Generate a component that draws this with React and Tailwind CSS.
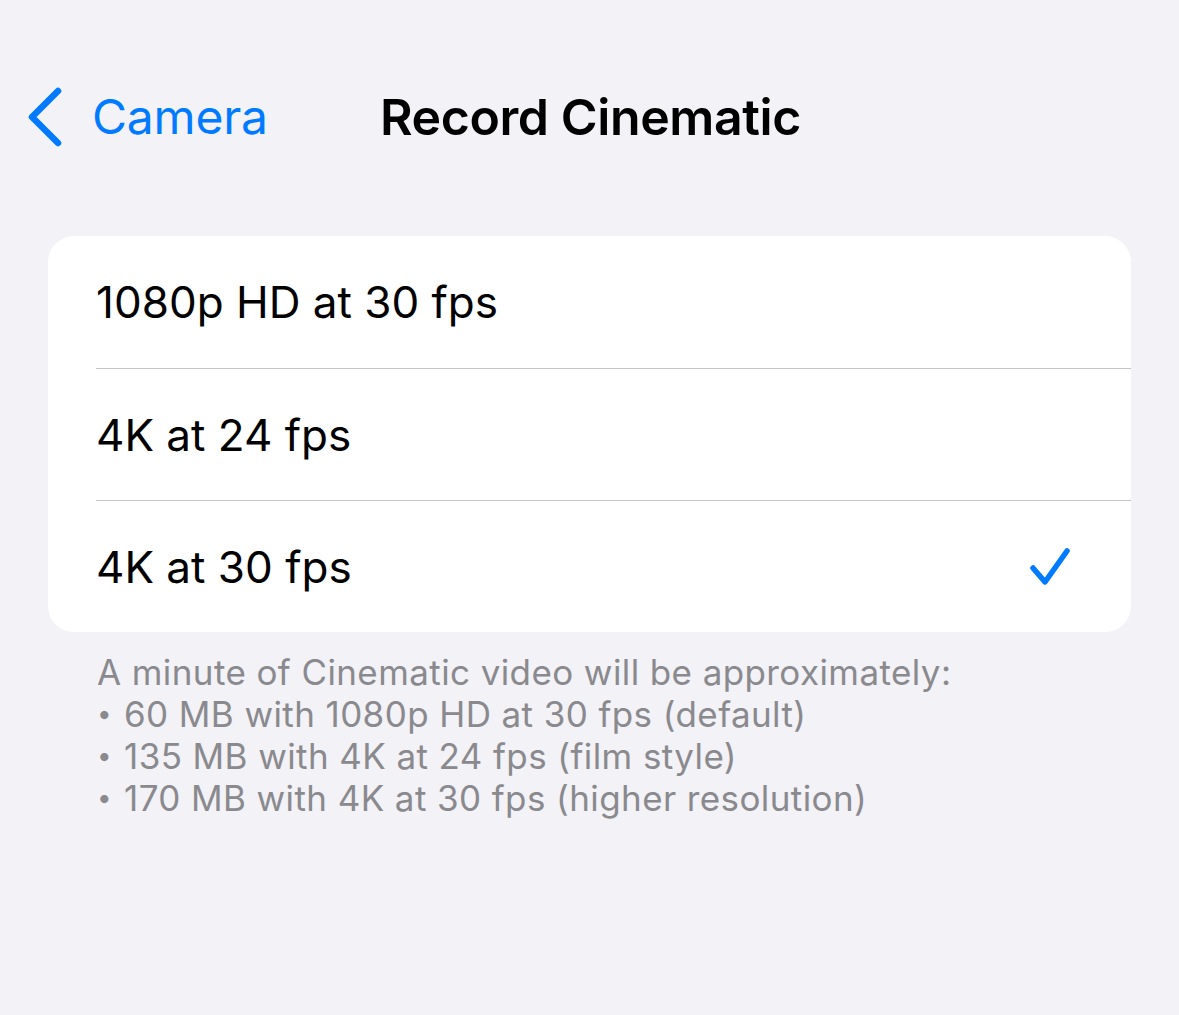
import React from 'react';

const options = [
    { label: '1080p HD at 30 fps', selected: false },
    { label: '4K at 24 fps', selected: false },
    { label: '4K at 30 fps', selected: true },
];

const notes = [
    '60 MB with 1080p HD at 30 fps (default)',
    '135 MB with 4K at 24 fps (film style)',
    '170 MB with 4K at 30 fps (higher resolution)',
];

const App = () => {
    return (
        <div className="min-h-[1015px] bg-[#f2f2f7] text-black" style={{ fontFamily: 'Inter, "Noto Sans", sans-serif' }}>
            {/* nav bar */}
            <div className="relative h-[236px]">
                <div className="absolute top-[86px] left-[24px] flex items-center">
                    <svg width="44" height="62" viewBox="0 0 44 62" fill="none">
                        <path d="M34 5 L8 31 L34 57" stroke="#007aff" strokeWidth="6.5" strokeLinecap="round" strokeLinejoin="round" />
                    </svg>
                    <span className="ml-[24px] text-[48px] leading-none text-[#007aff] tracking-[-0.2px]">Camera</span>
                </div>
                <div className="absolute top-[92px] left-[380px] text-[50px] font-semibold leading-none tracking-[-0.4px]">Record Cinematic</div>
            </div>

            {/* options */}
            <div className="mx-[48px] bg-white rounded-[26px] overflow-hidden">
                {options.map((o, i) => (
                    <div key={o.label} className="flex">
                        <div className={`flex-1 ml-[48px] flex items-center justify-between h-[132px] pr-[58px] ${i > 0 ? 'border-t border-[#c6c6c8]' : ''}`}>
                            <span className="text-[44px] leading-none">{o.label}</span>
                            {o.selected && (
                                <svg width="44" height="42" viewBox="0 0 44 42" fill="none">
                                    <path d="M4 22 L16 36 L38 5" stroke="#007aff" strokeWidth="5.5" strokeLinecap="round" strokeLinejoin="round" />
                                </svg>
                            )}
                        </div>
                    </div>
                ))}
            </div>

            {/* footer */}
            <div className="pl-[97px] pt-[19px] text-[35px] leading-[42px] tracking-[0.4px] text-[#8a8a8e]">
                <div>A minute of Cinematic video will be approximately:</div>
                {notes.map((n) => (
                    <div key={n} className="flex items-center">
                        <span className="w-[27px] text-[26px]">•</span>
                        <span>{n}</span>
                    </div>
                ))}
            </div>
        </div>
    );
};

export default App;
